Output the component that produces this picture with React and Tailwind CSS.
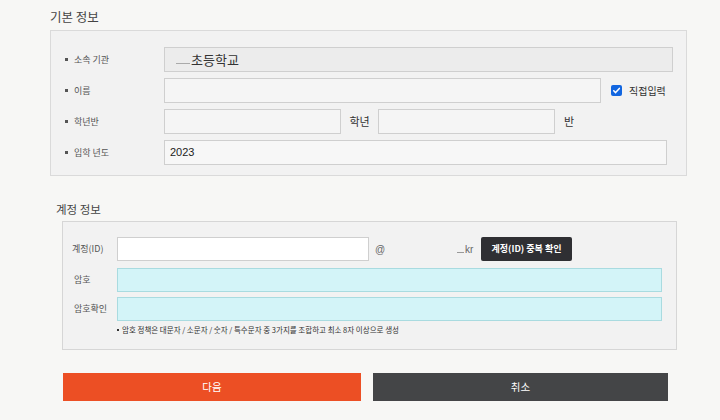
import React from "react";

const font = { fontFamily: '"Noto Sans CJK KR", "Noto Sans", sans-serif' };

function Label1({ children }) {
  return (
    <div className="flex w-[113px] shrink-0 items-center pl-[14px] text-[9px] text-[#555]">
      <span className="mr-[6px] inline-block h-[3px] w-[3px] bg-[#555]" />
      {children}
    </div>
  );
}

export default function App() {
  return (
    <div className="h-[420px] w-[720px] overflow-hidden bg-[#f7f7f5]" style={font}>
      <div className="pt-[9px]">
        <div className="ml-[50px] h-[16px] text-[12.5px] leading-[16px] text-[#444]">기본 정보</div>
        <div className="ml-[50px] mt-[5px] flex w-[637px] flex-col gap-[6px] border border-[#dadada] bg-[#f2f2f2] pb-[10px] pt-[16px]">
          <div className="flex h-[25px] items-stretch">
            <Label1>소속 기관</Label1>
            <div className="flex w-[509px] items-center border border-[#cfcfcf] bg-[#ececec] pl-[11px] text-[13px] text-[#333]">
              <span className="mr-[1px] mt-[8px] inline-block h-[1px] w-[14px] bg-[#aaa]" />
              초등학교
            </div>
          </div>
          <div className="flex h-[25px] items-stretch">
            <Label1>이름</Label1>
            <div className="w-[437px] border border-[#cfcfcf] bg-[#f5f5f5]" />
            <div className="ml-[10px] flex items-center">
              <span className="flex h-[11px] w-[11px] items-center justify-center rounded-[2px] bg-[#1266e0]">
                <svg viewBox="0 0 12 12" className="h-[9px] w-[9px]">
                  <path d="M2.3 6.3 L4.8 8.8 L9.8 3.2" fill="none" stroke="#fff" strokeWidth="2" strokeLinecap="round" strokeLinejoin="round" />
                </svg>
              </span>
              <span className="ml-[7px] text-[10px] text-[#333]">직접입력</span>
            </div>
          </div>
          <div className="flex h-[25px] items-stretch">
            <Label1>학년반</Label1>
            <div className="w-[177px] border border-[#cfcfcf] bg-[#f5f5f5]" />
            <div className="flex w-[37px] items-center justify-center text-[11px] text-[#333]">학년</div>
            <div className="w-[177px] border border-[#cfcfcf] bg-[#f5f5f5]" />
            <div className="flex items-center pl-[9px] text-[11px] text-[#333]">반</div>
          </div>
          <div className="flex h-[25px] items-stretch">
            <Label1>입학 년도</Label1>
            <div className="flex w-[503px] items-center border border-[#cfcfcf] bg-[#f7f7f7] pl-[5px] text-[11px] text-[#222]" style={{ fontFamily: '"Liberation Sans", Arial, sans-serif' }}>
              2023
            </div>
          </div>
        </div>

        <div className="ml-[56px] mt-[25px] h-[16px] text-[11.5px] leading-[16px] text-[#444]">계정 정보</div>
        <div className="ml-[62px] mt-[4px] flex w-[615px] flex-col border border-[#d6d6d6] bg-[#f2f2f2] pb-[14px] pl-[9px] pt-[15px]">
          <div className="flex h-[24px] items-stretch">
            <div className="flex w-[45px] items-center text-[9px] text-[#555]">계정(ID)</div>
            <div className="w-[252px] border border-[#cfcfcf] bg-white" />
            <div className="flex w-[88px] items-center pl-[6px] text-[10px] text-[#666]" style={{ fontFamily: '"Liberation Sans", Arial, sans-serif' }}>@</div>
            <div className="flex w-[24px] items-center text-[10px] text-[#666]" style={{ fontFamily: '"Liberation Sans", Arial, sans-serif' }}>
              <span className="mt-[7px] mr-[1px] inline-block h-[1px] w-[7px] bg-[#999]" />kr
            </div>
            <div className="flex w-[91px] items-center justify-center rounded-[2px] bg-[#2f2f33] text-[9px] font-bold text-white">계정(ID) 중복 확인</div>
          </div>
          <div className="mt-[7px] flex h-[24px] items-stretch">
            <div className="flex w-[45px] items-center pl-[2px] text-[9px] text-[#555]">암호</div>
            <div className="w-[545px] border border-[#a9dbe0] bg-[#d3f4f8]" />
          </div>
          <div className="mt-[5px] flex h-[24px] items-stretch">
            <div className="flex w-[45px] items-center pl-[2px] text-[9px] text-[#555]">암호확인</div>
            <div className="w-[545px] border border-[#a9dbe0] bg-[#d3f4f8]" />
          </div>
          <div className="ml-[45px] mt-[4px] flex items-center text-[7.5px] leading-[10px] text-[#333]">
            <span className="mr-[3px] inline-block h-[2px] w-[2px] bg-[#333]" />
            암호 정책은 대문자 / 소문자 / 숫자 / 특수문자 중 3가지를 조합하고 최소 8자 이상으로 생성
          </div>
        </div>

        <div className="ml-[63px] mt-[23px] flex w-[605px] gap-[12px]">
          <div className="flex h-[28px] w-[298px] items-center justify-center bg-[#ec4f24] text-[10.5px] text-white">다음</div>
          <div className="flex h-[28px] w-[295px] items-center justify-center bg-[#444547] text-[10.5px] text-white">취소</div>
        </div>
      </div>
    </div>
  );
}
